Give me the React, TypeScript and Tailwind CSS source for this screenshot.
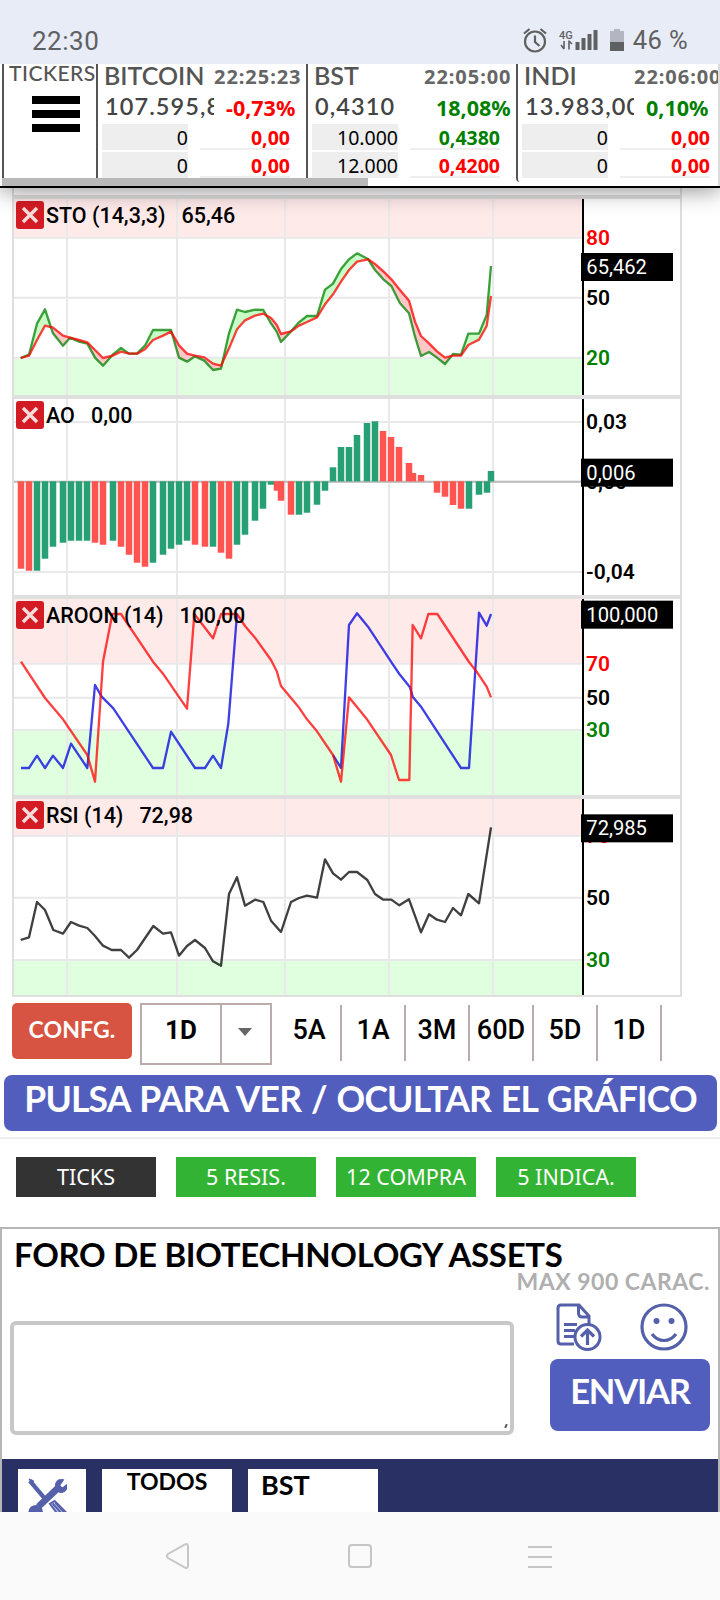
import type { ReactNode } from 'react';

// Chart space: three units per pixel, shared by the four indicator panels
const VIEW_BOX = '42 27 1998 588';
const GRID_X = [201, 531, 855, 1167, 1479];
const AXIS_X = 1749;

const ROUND = "font-['Lato','Noto_Sans',sans-serif]";

type Point = [number, number];

// [x, fast, slow]
const STO: [number, number, number][] = [
  [62, 504, 504], [87, 494, 497], [111, 401, 450], [135, 358, 407], [159, 430, 413], [189, 467, 437],
  [210, 443, 443], [237, 455, 450], [262, 461, 457], [285, 503, 480], [309, 527, 504], [338, 494, 497],
  [363, 474, 485], [387, 491, 491], [411, 491, 491], [435, 467, 478], [459, 420, 450], [489, 420, 437],
  [513, 420, 425], [537, 503, 466], [561, 515, 491], [585, 499, 497], [613, 512, 502], [639, 540, 521],
  [663, 536, 527], [687, 430, 475], [711, 359, 418], [735, 366, 391], [765, 359, 377], [790, 360, 371],
  [813, 400, 384], [830, 425, 404], [843, 456, 432], [873, 424, 424], [897, 397, 407], [921, 378, 396],
  [951, 378, 382], [975, 299, 343], [999, 281, 313], [1023, 237, 275], [1047, 208, 240], [1071, 190, 215],
  [1104, 207, 208], [1125, 240, 222], [1150, 268, 244], [1174, 288, 268], [1200, 340, 300], [1227, 370, 332],
  [1245, 440, 395], [1263, 498, 438], [1287, 486, 460], [1311, 503, 484], [1335, 522, 503], [1359, 492, 497],
  [1383, 494, 497], [1405, 431, 465], [1437, 431, 449], [1460, 375, 408], [1473, 228, 318],
];

const UP = '#26a074';
const DOWN = '#ff5450';

// [x, y, colour]
const AO: [number, number, string][] = [
  [63, 536, DOWN], [87, 542, DOWN], [111, 542, UP], [135, 506, UP], [159, 470, UP], [189, 458, UP],
  [213, 452, UP], [237, 452, UP], [261, 452, UP], [285, 458, DOWN], [309, 464, DOWN], [339, 452, UP],
  [363, 470, DOWN], [387, 494, DOWN], [411, 518, DOWN], [435, 530, DOWN], [459, 518, UP], [489, 494, UP],
  [513, 476, UP], [537, 464, UP], [561, 452, UP], [585, 464, DOWN], [615, 470, DOWN], [639, 470, UP],
  [663, 488, DOWN], [687, 506, DOWN], [711, 464, UP], [735, 434, UP], [765, 392, UP], [789, 356, UP],
  [813, 284, UP], [831, 302, DOWN], [843, 332, DOWN], [873, 374, DOWN], [897, 374, UP], [921, 368, UP],
  [951, 344, UP], [975, 302, UP], [999, 232, UP], [1023, 171, UP], [1047, 171, UP], [1071, 135, UP],
  [1101, 99, UP], [1125, 94, UP], [1149, 123, DOWN], [1173, 141, DOWN], [1197, 171, DOWN], [1227, 219, DOWN],
  [1239, 249, DOWN], [1263, 255, DOWN], [1311, 308, DOWN], [1335, 320, DOWN], [1359, 345, DOWN],
  [1383, 356, DOWN], [1407, 356, UP], [1437, 314, UP], [1461, 308, UP], [1473, 243, UP],
];

const AROON_DOWN: Point[] = [
  [63, 215], [135, 324], [189, 388], [262, 495], [285, 575], [309, 215], [337, 72], [363, 72], [459, 215],
  [489, 251], [561, 356], [583, 72], [639, 145], [663, 72], [711, 72], [735, 108], [765, 143], [813, 210],
  [830, 243], [843, 288], [895, 350], [921, 388], [951, 424], [999, 495], [1023, 575], [1047, 322],
  [1101, 388], [1173, 495], [1197, 570], [1228, 570], [1238, 105], [1263, 145], [1285, 72], [1312, 72],
  [1407, 216], [1430, 245], [1460, 290], [1473, 322],
];

// Both lines run together between the two stretches, where only the red one shows
const AROON_UP_1: Point[] = [
  [63, 534], [87, 534], [111, 497], [135, 534], [159, 497], [189, 534], [213, 461], [262, 534], [285, 285],
  [305, 320], [340, 355], [459, 534], [489, 534], [513, 425], [585, 534], [615, 534], [639, 497], [663, 534],
  [685, 400], [711, 72],
];
const AROON_UP_2: Point[] = [
  [999, 495], [1023, 534], [1047, 105], [1071, 70], [1104, 110], [1173, 215], [1198, 252],
  [1230, 292], [1238, 320], [1263, 350], [1383, 534], [1407, 534], [1437, 68], [1460, 107], [1473, 72],
];

const RSI: Point[] = [
  [62, 450], [87, 442], [111, 336], [135, 360], [160, 420], [189, 431], [213, 396], [237, 407], [262, 414],
  [285, 438], [309, 467], [335, 480], [363, 480], [387, 503], [411, 480], [460, 408], [489, 431], [513, 427],
  [537, 497], [561, 468], [585, 450], [615, 474], [639, 514], [663, 527], [687, 312], [711, 262], [735, 347],
  [765, 329], [790, 336], [813, 392], [843, 426], [873, 336], [897, 324], [921, 317], [951, 323], [975, 208],
  [999, 250], [1023, 269], [1047, 246], [1071, 246], [1102, 270], [1125, 312], [1150, 329], [1174, 329],
  [1198, 346], [1227, 328], [1263, 427], [1287, 373], [1311, 389], [1335, 396], [1359, 354], [1383, 376],
  [1405, 312], [1437, 340], [1473, 112],
];

function Line({ points, color }: { points: Point[]; color: string }) {
  return (
    <polyline
      points={points.map((p) => p.join(',')).join(' ')}
      fill="none"
      stroke={color}
      strokeWidth={7}
      strokeOpacity={0.75}
      strokeLinejoin="round"
    />
  );
}

interface PanelProps {
  title: string;
  value: string;
  tag: string;
  tagY: number;
  high?: number;
  low?: number;
  labels: { y: number; text: string; color: string }[];
  children: ReactNode;
}

function Panel({ title, value, tag, tagY, high, low, labels, children }: PanelProps) {
  return (
    <section className="relative h-[200px] border-x-2 border-t-4 border-[#dfdfdf]">
      <svg viewBox={VIEW_BOX} className="block h-[196px] w-[666px]">
        {high && <rect x={42} y={27} width={1706} height={high - 27} fill="#ffeaea" />}
        {low && <rect x={42} y={low} width={1706} height={615 - low} fill="#dfffdf" />}
        {labels.map((l) => (
          <path key={l.y} d={`M42 ${l.y}H1748`} stroke="#e9e9e9" strokeWidth={6} />
        ))}
        {GRID_X.map((x) => (
          <path key={x} d={`M${x} 27V615`} stroke="#e9e9e9" strokeWidth={6} />
        ))}
        {children}
        <path d={`M${AXIS_X} 27V615`} stroke="#000" strokeWidth={6} />
        <g fontFamily="Roboto, sans-serif" fontSize={63}>
          {labels.map((l) => (
            <text key={l.y} x={1758} y={l.y + 21} fill={l.color} fontWeight={600}>
              {l.text}
            </text>
          ))}
          <rect x={1743} y={tagY} width={276} height={84} fill="#000" />
          <text x={1759} y={tagY + 63} fill="#fff" fontSize={60.5}>
            {tag}
          </text>
        </g>
      </svg>
      <div className="absolute left-0.5 top-0.5 flex items-start font-['Roboto',sans-serif] text-[21.5px] leading-7 font-medium whitespace-pre text-black">
        <svg viewBox="0 0 28 28" className="mr-0.5 h-7 w-7">
          <rect width={28} height={28} rx={3} fill="#d31b23" />
          <path d="M7 7 21 21M21 7 7 21" stroke="#fbdcdc" strokeWidth={3.4} />
        </svg>
        <span className="pt-px">{title}</span>
        <span className="ml-4 pt-px">{value}</span>
      </div>
    </section>
  );
}

function Charts() {
  return (
    <div className="ml-3 w-[670px]">
      <div className="h-[7px] border-x-2 border-[#dfdfdf]" />
      <Panel
        title="STO (14,3,3)"
        value="65,46"
        tag="65,462"
        tagY={189}
        high={143}
        low={503}
        labels={[
          { y: 143, text: '80', color: '#ff0000' },
          { y: 323, text: '50', color: '#000' },
          { y: 503, text: '20', color: '#008000' },
        ]}
      >
        {STO.slice(1).map(([x, fast, slow], i) => {
          const [px, pf, ps] = STO[i];
          return (
            <polygon
              key={x}
              points={`${px},${pf} ${x},${fast} ${x},${slow} ${px},${ps}`}
              fill={pf + fast < ps + slow ? '#c8ffc8' : '#ffc8c8'}
            />
          );
        })}
        <Line points={STO.map(([x, fast]) => [x, fast])} color="#008000" />
        <Line points={STO.map(([x, , slow]) => [x, slow])} color="#ff0000" />
      </Panel>

      <Panel
        title="AO"
        value="0,00"
        tag="0,006"
        tagY={206}
        labels={[
          { y: 96, text: '0,03', color: '#000' },
          { y: 275, text: '0,00', color: '#000' },
          { y: 546, text: '-0,04', color: '#000' },
        ]}
      >
        <path d="M42 275H1748" stroke="#bbb" strokeWidth={6} />
        {AO.map(([x, y, color]) => (
          <g key={x} fill={color}>
            <rect x={x - 12} y={Math.min(y, 274)} width={24} height={Math.abs(y - 274)} fillOpacity={0.25} />
            <rect x={x - 9} y={Math.min(y, 274)} width={18} height={Math.abs(y - 274)} />
          </g>
        ))}
      </Panel>

      <Panel
        title="AROON (14)"
        value="100,00"
        tag="100,000"
        tagY={32}
        high={221}
        low={420}
        labels={[
          { y: 221, text: '70', color: '#ff0000' },
          { y: 323, text: '50', color: '#000' },
          { y: 420, text: '30', color: '#008000' },
        ]}
      >
        <Line points={AROON_UP_1} color="#0000dc" />
        <Line points={AROON_UP_2} color="#0000dc" />
        <Line points={AROON_DOWN} color="#ff0000" />
      </Panel>

      <Panel
        title="RSI (14)"
        value="72,98"
        tag="72,985"
        tagY={73}
        high={138}
        low={510}
        labels={[
          { y: 138, text: '70', color: '#ff0000' },
          { y: 323, text: '50', color: '#000' },
          { y: 510, text: '30', color: '#008000' },
        ]}
      >
        <Line points={RSI} color="#000" />
      </Panel>
      <div className="h-0.5 bg-[#dfdfdf]" />
    </div>
  );
}

function StatusBar() {
  return (
    <div className="relative z-20 flex h-16 items-start bg-[#e8ecf6] px-8 font-['Roboto',sans-serif] text-[26px] leading-none text-[#5f6062]">
      <span className="mt-7 tracking-[0.5px]">22:30</span>
      <svg viewBox="0 0 24 25" className="mt-7 ml-auto h-[25px] w-6" fill="none" stroke="#5f6062" strokeWidth={2.2}>
        <circle cx={12} cy={13.5} r={10} />
        <path d="M12 7.5V14l4.5 4M1 5.5 6.5 1M23 5.5 17.5 1" />
      </svg>
      <svg viewBox="0 0 40 22" className="mt-[29px] ml-3 h-[22px] w-10" fill="#5f6062">
        <text x={0} y={10} fontSize={11} fontWeight={500} fontFamily="Roboto, sans-serif">
          4G
        </text>
        <path d="M5 12v8M10 11.5v9M10 12l3 3M5 20l-3-4" stroke="#5f6062" strokeWidth={1.6} fill="none" />
        <path d="M16.5 13h4v8h-4zM22.5 9h4v12h-4zM28.5 5h4v16h-4zM34.5 1h4v20h-4z" />
      </svg>
      <svg viewBox="0 0 14 22" className="mt-[29px] ml-[11px] h-[22px] w-3.5">
        <path d="M4 0h6v2h4v11H0V2h4z" fill="#b3b6c0" />
        <path d="M0 13h14v9H0z" fill="#5f6062" />
      </svg>
      <span className="mt-7 ml-[9px] text-[25.5px] tracking-[0.4px]">46 %</span>
    </div>
  );
}

interface Ticker {
  name: string;
  time: string;
  price: string;
  change: string;
  up: boolean;
  rows: { qty: string; value: string; up: boolean }[];
}

const tickers: Ticker[] = [
  {
    name: 'BITCOIN',
    time: '22:25:23',
    price: '107.595,8',
    change: '-0,73%',
    up: false,
    rows: [
      { qty: '0', value: '0,00', up: false },
      { qty: '0', value: '0,00', up: false },
    ],
  },
  {
    name: 'BST',
    time: '22:05:00',
    price: '0,4310',
    change: '18,08%',
    up: true,
    rows: [
      { qty: '10.000', value: '0,4380', up: true },
      { qty: '12.000', value: '0,4200', up: false },
    ],
  },
  {
    name: 'INDI',
    time: '22:06:00',
    price: '13.983,00',
    change: '0,10%',
    up: true,
    rows: [
      { qty: '0', value: '0,00', up: false },
      { qty: '0', value: '0,00', up: false },
    ],
  },
];

function TickerCell({ t }: { t: Ticker }) {
  return (
    <div className="h-[118px] w-[210px] shrink-0 rounded-bl border-l-2 border-[#555] font-['Noto_Sans',sans-serif]">
      <div className="flex h-7">
        <span className={`${ROUND} ml-1.5 w-[110px] shrink-0 text-[25px] leading-[23px] font-semibold whitespace-nowrap text-[#555]`}>
          {t.name}
        </span>
        <span className="text-[20px] leading-[25px] font-bold tracking-[0.95px] whitespace-nowrap text-[#666]">{t.time}</span>
      </div>
      <div className="flex h-8">
        <span className={`${ROUND} ml-[7px] w-[109px] shrink-0 overflow-hidden text-[23.5px] leading-[29px] font-semibold tracking-[1.1px] whitespace-nowrap text-[#444]`}>
          {t.price}
        </span>
        <span className={`ml-3 text-[21.5px] leading-[32px] font-bold whitespace-nowrap ${t.up ? 'text-[#008000]' : 'text-[#ff0000]'}`}>
          {t.change}
        </span>
      </div>
      {t.rows.map((row, i) => (
        <div key={i} className="mb-0.5 flex h-[26px] text-[19.5px] leading-[28px]">
          <span className="ml-1 w-[86px] bg-[#eee] text-right text-black">{row.qty}</span>
          <span className={`ml-3 w-[90px] border-b-2 border-[#eee] text-right font-bold ${row.up ? 'text-[#008000]' : 'text-[#ff0000]'}`}>
            {row.value}
          </span>
        </div>
      ))}
    </div>
  );
}

function TickerBar() {
  return (
    <header className="relative z-10 h-[124px] border-b-2 border-black bg-white shadow-[0_2px_22px_rgba(0,0,0,0.45)]">
      <div className="ml-0.5 flex h-[122px] overflow-hidden border-r-2 border-[#ddd]">
        <div className="h-[118px] w-[94px] shrink-0 border-l-2 border-[#555]">
          <div className={`${ROUND} ml-[5px] text-[21px] leading-[18px] font-medium tracking-[0.5px] whitespace-nowrap text-[#555]`}>TICKERS</div>
          <div className="mt-3.5 ml-7 flex w-12 flex-col gap-1.5">
            <span className="h-2 bg-black" />
            <span className="h-2 bg-black" />
            <span className="h-2 bg-black" />
          </div>
        </div>
        {tickers.map((t) => (
          <TickerCell key={t.name} t={t} />
        ))}
      </div>
      {/* Horizontal scrollbar */}
      <div className="absolute bottom-0 left-0.5 h-2 w-[366px] bg-[#b9b9b9]" />
    </header>
  );
}

const ranges = ['5A', '1A', '3M', '60D', '5D', '1D'];

const filters = [
  { label: 'TICKS', className: 'bg-[#333]' },
  { label: '5 RESIS.', className: 'bg-[#33b333]' },
  { label: '12 COMPRA', className: 'bg-[#33b333]' },
  { label: '5 INDICA.', className: 'bg-[#33b333]' },
];

function ChartControls() {
  return (
    <div className="mt-1.5 ml-3 flex h-[62px] font-['Roboto',sans-serif] text-black">
      <button className={`${ROUND} h-14 w-[120px] rounded-[5px] bg-[#d85442] pb-1 text-[23px] font-bold tracking-[0.1px] text-white`}>
        CONFG.
      </button>
      <div className="ml-2 flex w-[132px] border-2 border-[#bcabab]">
        <span className="w-20 border-r-2 border-[#bcabab] pt-[9px] text-center text-[26px] leading-8 font-bold">1D</span>
        <span className="flex flex-1 items-center justify-center pr-0.5 pb-1">
          <svg viewBox="0 0 14 8" className="h-2 w-3.5">
            <path d="M0 0h14L7 8z" fill="#666" />
          </svg>
        </span>
      </div>
      <div className="mt-0.5 ml-1.5 flex h-14">
        {ranges.map((r) => (
          <span key={r} className="w-16 border-r-2 border-[#bcabab] pt-2 text-center text-[27px] leading-[34px] font-medium">
            {r}
          </span>
        ))}
      </div>
    </div>
  );
}

function Forum() {
  return (
    <section className="flex h-[285px] flex-col border-x-2 border-t-2 border-[#b6b6b6] bg-white">
      <h2 className={`${ROUND} mt-1 ml-3 h-[41px] text-[33px] leading-[42px] font-bold tracking-[-0.3px] whitespace-nowrap text-black`}>
        FORO DE BIOTECHNOLOGY ASSETS
      </h2>
      <p className={`${ROUND} mr-2 -mt-[7px] h-[30px] text-right text-[23px] leading-7 font-bold tracking-[0.5px] whitespace-nowrap text-[#afafaf]`}>
        MAX 900 CARAC.
      </p>
      <div className="flex h-[162px] pl-2">
        <div className="mt-6 flex h-[114px] w-[504px] items-end justify-end rounded-md border-4 border-[#c8c8c8] p-[3px]">
          <span className="h-1 w-0.5 rotate-[25deg] bg-[#555]" />
        </div>
        <div className="ml-9 w-40">
          <div className="mt-1.5 flex h-14 items-start">
            <svg viewBox="0 0 46 48" className="ml-1.5 h-12 w-[46px]" fill="none" stroke="#5560ab" strokeWidth={3}>
              <path d="M18 41H5q-3 0-3-3V5q0-3 3-3h18l10 11v8M22.5 2v8q0 4 4 4H33M8 21.5h13M8 27.5h11M8 33.5h10" />
              <circle cx={31.5} cy={34} r={12.5} />
              <path d="M31.5 42V28M25 33.5l6.5-6.5 6.5 6.5" strokeWidth={3.2} />
            </svg>
            <svg viewBox="0 0 48 48" className="ml-[38px] h-12 w-12" fill="none" stroke="#5560ab" strokeWidth={3.2}>
              <circle cx={24} cy={24} r={22} />
              <path d="M12 31q5 6.5 12 6.5T36 31" />
              <circle cx={16.5} cy={18} r={3} fill="#5560ab" stroke="none" />
              <circle cx={31.5} cy={18} r={3} fill="#5560ab" stroke="none" />
            </svg>
          </div>
          <button className={`${ROUND} h-[72px] w-40 rounded-lg bg-[#525ebd] pb-2 text-[34.5px] leading-none font-bold tracking-[-1.2px] text-white`}>
            ENVIAR
          </button>
        </div>
      </div>
      <div className={`${ROUND} flex flex-1 gap-4 overflow-hidden bg-[#283064] pt-2.5 pl-4 font-bold text-black`}>
        <div className="w-[68px] bg-white pt-2 pl-[9px]">
          <svg viewBox="0 0 42 42" className="h-[42px] w-10" fill="none" stroke="#5560ab">
            <path d="M3 3 19 22" strokeWidth={4.5} />
            <path d="M2 1.5 6 3l1 4" strokeWidth={2} />
            <path d="M12 30 32 11" strokeWidth={7} />
            <path d="M38 2q-8-1-8 7 0 5 5 6 7 0 7-8l-5 4-3-3z" fill="#5560ab" strokeWidth={1.5} />
            <path d="M2 38q0-9 8-9 6 1 6 7l-2 5-2-6-6 1z" fill="#5560ab" strokeWidth={1.5} />
            <path d="m24 27 5-3 13 13v6H36z" strokeWidth={2} fill="#b9bedf" />
            <path d="m27 27 13 14M30 26l12 13" strokeWidth={2} />
          </svg>
        </div>
        <div className="w-[130px] bg-white text-center text-[23px] leading-[25px]">TODOS</div>
        <div className="w-[130px] bg-white pl-[13px] text-[27px] leading-8">BST</div>
      </div>
    </section>
  );
}

function SystemNav() {
  return (
    <nav className="flex h-[88px] items-start bg-[#fafafa] pt-[31px] pl-[166px]">
      <svg viewBox="0 0 24 26" className="h-[26px] w-6" fill="none" stroke="#c6c6c6" strokeWidth={2}>
        <path d="M19 1.5q3-1.5 3 2v19q0 3.5-3 2L2 15q-2-2 0-4z" />
      </svg>
      <span className="mt-px ml-[158px] h-6 w-6 rounded-[4px] border-2 border-[#c6c6c6]" />
      <span className="mt-[3px] ml-[156px] flex w-6 flex-col gap-2">
        <i className="h-0.5 bg-[#c6c6c6]" />
        <i className="h-0.5 bg-[#c6c6c6]" />
        <i className="h-0.5 bg-[#c6c6c6]" />
      </span>
    </nav>
  );
}

export default function App() {
  return (
    <div className="h-[1600px] w-[720px] overflow-hidden bg-white">
      <StatusBar />
      <TickerBar />
      <Charts />
      <ChartControls />

      <div className="mt-2.5 border-b-2 border-[#eee] pr-[3px] pb-1.5 pl-1">
        <button className={`${ROUND} block h-14 w-full rounded-lg bg-[#525ebd] pb-2 text-[35.5px] leading-none font-bold tracking-[-0.8px] [word-spacing:2px] whitespace-nowrap text-white`}>
          PULSA PARA VER / OCULTAR EL GRÁFICO
        </button>
      </div>

      <div className="mb-[30px] flex gap-5 px-4 pt-[18px] font-['Noto_Sans',sans-serif] text-[21.5px] text-white">
        {filters.map((f) => (
          <button key={f.label} className={`h-10 w-[140px] leading-10 whitespace-nowrap ${f.className}`}>
            {f.label}
          </button>
        ))}
      </div>

      <Forum />
      <SystemNav />
    </div>
  );
}
